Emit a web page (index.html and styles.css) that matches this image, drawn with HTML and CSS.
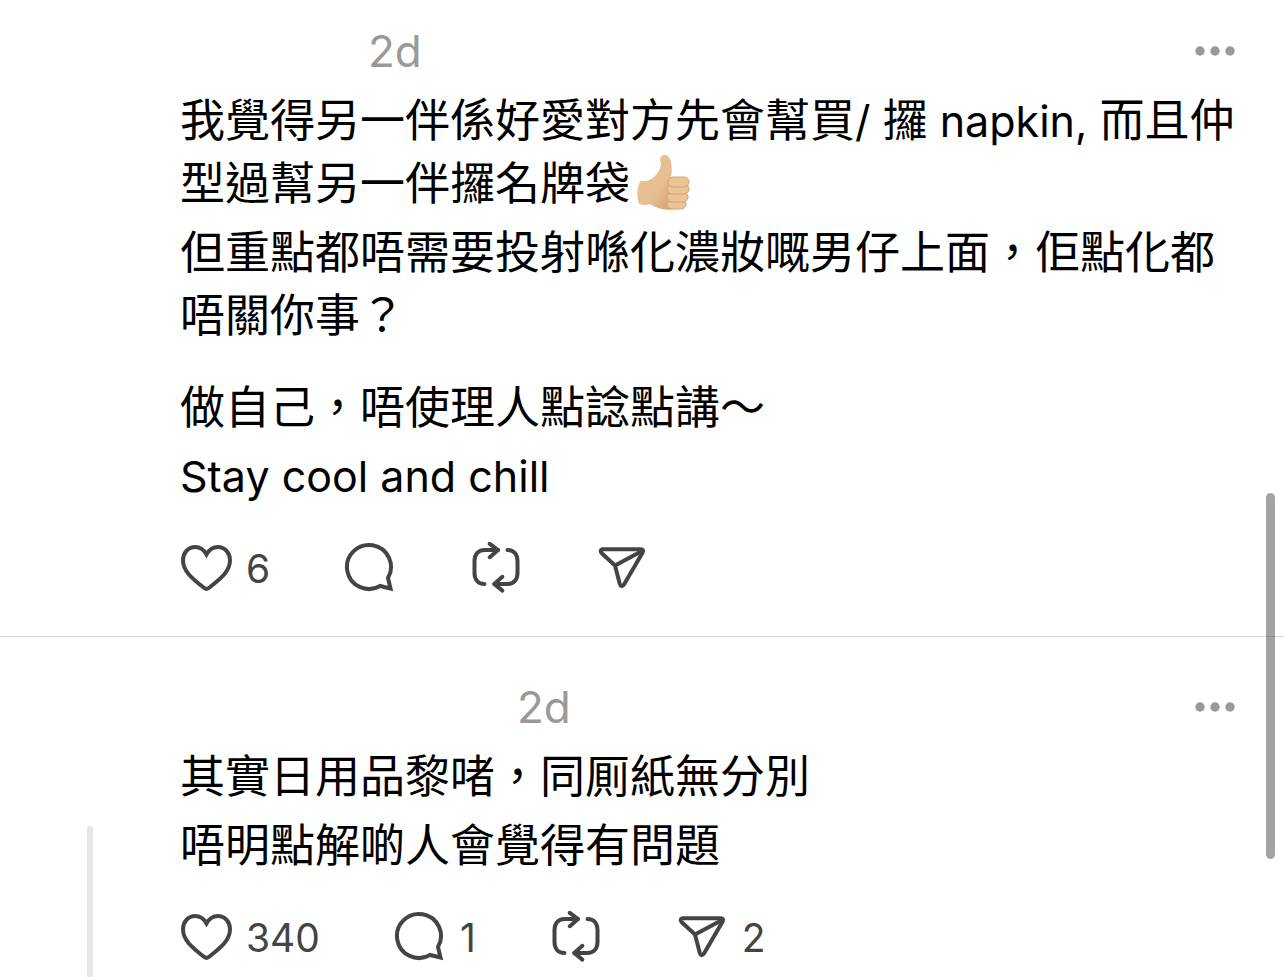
FILE: index.html
```html
<!DOCTYPE html>
<html lang="zh-HK">

<head>
    <meta charset="UTF-8">
    <meta name="viewport" content="width=device-width, initial-scale=1.0">
    <title>Thread</title>
    <link rel="stylesheet" href="styles.css">
</head>

<body>
    <!-- shared icons -->
    <svg class="sprite" aria-hidden="true">
        <symbol id="heart" viewBox="0 0 52 52">
            <path d="M26.5 12.5C24 8 20 5 15.3 5C8 5 3 11 3 18.3C3 29 11.5 36 24.5 46.2Q26.5 47.6 28.5 46.2C41.5 36 50 29 50 18.3C50 11 45 5 37.7 5C33 5 29 8 26.5 12.5Z" />
        </symbol>
        <symbol id="comment" viewBox="0 0 52 52">
            <path d="M44 36L46.5 46.5L36 44A22 22 0 1 1 44 36Z" />
        </symbol>
        <symbol id="repost" viewBox="0 0 52 52">
            <g stroke-linecap="round" stroke-linejoin="round">
                <path d="M14.5 42C8 42 4.5 37.5 4.5 31V19C4.5 12 8.5 8 15 8H28" />
                <path d="M19.8 1.8L28 8L19.8 15.2" />
                <path d="M37.5 8C44 8 47.5 12.5 47.5 19V31C47.5 38 43.5 42 37 42H24.5" />
                <path d="M32.4 34.8L24.2 42L32.4 48.6" />
            </g>
        </symbol>
        <symbol id="share" viewBox="0 0 52 52">
            <g stroke-linejoin="round">
                <path d="M6.5 7.2H44.5Q48.5 7.2 46.5 10.8L28 42.5Q25 46 23.8 42L19 23.5L5.5 11Q3.5 7.8 6.5 7.2Z" />
                <path d="M19 23.5L47 8.5" />
            </g>
        </symbol>
        <symbol id="more" viewBox="0 0 40 10">
            <circle cx="5" cy="5" r="4.7" />
            <circle cx="20" cy="5" r="4.7" />
            <circle cx="35" cy="5" r="4.7" />
        </symbol>
    </svg>

    <main class="thread">
        <article class="post">
            <div class="side"></div>
            <div class="main">
                <header class="head">
                    <span class="name"></span>
                    <time class="time">2d</time>
                    <button class="more" type="button" aria-label="More"><svg><use href="#more" /></svg></button>
                </header>
                <div class="text">
                    <p>我覺得另一伴係好愛對方先會幫買<span class="en">/ </span>攞<span class="en"> napkin, </span>而且仲型過幫另一伴攞名牌袋<svg class="emoji" viewBox="0 0 60 60" role="img" aria-label="👍🏼">
                            <defs>
                                <linearGradient id="skin" x1="0" y1="0" x2="1" y2="1">
                                    <stop offset="0" stop-color="#e9c39a" />
                                    <stop offset=".6" stop-color="#e6bd90" />
                                    <stop offset="1" stop-color="#cf9368" />
                                </linearGradient>
                            </defs>
                            <path fill="url(#skin)" d="M10 29Q19 30 24 25Q31 18 31 11Q28 3 35 3Q40 3 41 11Q43 19 40 28L41 50L48 55Q44 59 32 57Q24 55 20 52Q14 54 9 52Q5 41 10 29Z" />
                            <g fill="#eac397" stroke="#d6a278" stroke-width="1">
                                <rect x="37" y="47" width="19" height="10" rx="5" />
                                <rect x="37" y="40" width="21" height="10" rx="5" />
                                <rect x="37" y="32" width="22" height="10" rx="5" />
                                <rect x="38" y="25" width="21" height="10" rx="5" />
                            </g>
                        </svg></p>
                    <p>但重點都唔需要投射喺化濃妝嘅男仔上面，佢點化都唔關你事？</p>
                    <p class="break">做自己，唔使理人點諗點講～</p>
                    <p class="en">Stay cool and chill</p>
                </div>
                <div class="actions">
                    <button type="button" aria-label="Like"><svg><use href="#heart" /></svg><span>6</span></button>
                    <button type="button" aria-label="Reply"><svg><use href="#comment" /></svg></button>
                    <button type="button" aria-label="Repost"><svg><use href="#repost" /></svg></button>
                    <button type="button" aria-label="Share"><svg><use href="#share" /></svg></button>
                </div>
            </div>
        </article>

        <article class="post">
            <div class="side">
                <div class="avatar"></div>
                <div class="line"></div>
            </div>
            <div class="main">
                <header class="head">
                    <span class="name long"></span>
                    <time class="time">2d</time>
                    <button class="more" type="button" aria-label="More"><svg><use href="#more" /></svg></button>
                </header>
                <div class="text">
                    <p>其實日用品黎啫，同厠紙無分別</p>
                    <p>唔明點解啲人會覺得有問題</p>
                </div>
                <div class="actions">
                    <button type="button" aria-label="Like"><svg><use href="#heart" /></svg><span>340</span></button>
                    <button type="button" aria-label="Reply"><svg><use href="#comment" /></svg><span>1</span></button>
                    <button type="button" aria-label="Repost"><svg><use href="#repost" /></svg></button>
                    <button type="button" aria-label="Share"><svg><use href="#share" /></svg><span>2</span></button>
                </div>
            </div>
        </article>
    </main>
    <div class="scroll-thumb"></div>
</body>

</html>
```
FILE: styles.css
```css
* {
    margin: 0;
    padding: 0;
    box-sizing: border-box;
}

body {
    background-color: #fff;
    color: #000;
    font-family: Inter, "Noto Sans CJK TC", sans-serif;
    font-size: 45px;
}

.sprite {
    position: absolute;
    width: 0;
    height: 0;
}

.post {
    display: grid;
    grid-template-columns: 180px 1fr;
}

.post + .post {
    border-top: 1px solid #d9d9d9;
}

.side {
    display: flex;
    flex-direction: column;
    align-items: center;
}

.avatar {
    height: 189px;
}

.line {
    flex: 1;
    width: 6px;
    border-radius: 3px 3px 0 0;
    background-color: #e5e5e5;
}

.main {
    padding: 24px 36px 42px 0;
}

.post + .post .main {
    padding-top: 43px;
    padding-bottom: 15px;
}

.head {
    display: flex;
    align-items: center;
    height: 54px;
    margin-bottom: 11px;
    padding-right: 13px;
}

.name {
    width: 188px;
}

.name.long {
    width: 337px;
}

.time {
    color: #999;
    font-size: 44px;
    line-height: 54px;
}

button {
    border: none;
    background: none;
    font: inherit;
    color: inherit;
    cursor: pointer;
}

.more {
    display: flex;
    margin-left: auto;
}

.more svg {
    width: 40px;
    height: 10px;
    fill: #999;
}

/* latin runs look bigger than the chinese, take them down a bit */
.en {
    font-size: 43px;
    line-height: 1;
}

.text p {
    line-height: 63px;
}

.text p + p {
    margin-top: 6px;
}

.text p.break {
    margin-top: 29px;
}

.emoji {
    display: inline-block;
    width: 60px;
    height: 60px;
    vertical-align: -6px;
    margin: -6px 0;
}

.actions {
    display: flex;
    gap: 74px;
    margin-top: 34px;
}

.actions button {
    display: flex;
    align-items: center;
    gap: 14px;
    height: 52px;
    color: #444;
    font-size: 39px;
}

.actions svg {
    width: 52px;
    height: 52px;
    fill: none;
    stroke: #444;
    stroke-width: 4px;
}

/* scroll indicator over the page */
.scroll-thumb {
    position: fixed;
    top: 493px;
    right: 9px;
    width: 9px;
    height: 366px;
    border-radius: 5px;
    background-color: rgba(0, 0, 0, .36);
}
```
